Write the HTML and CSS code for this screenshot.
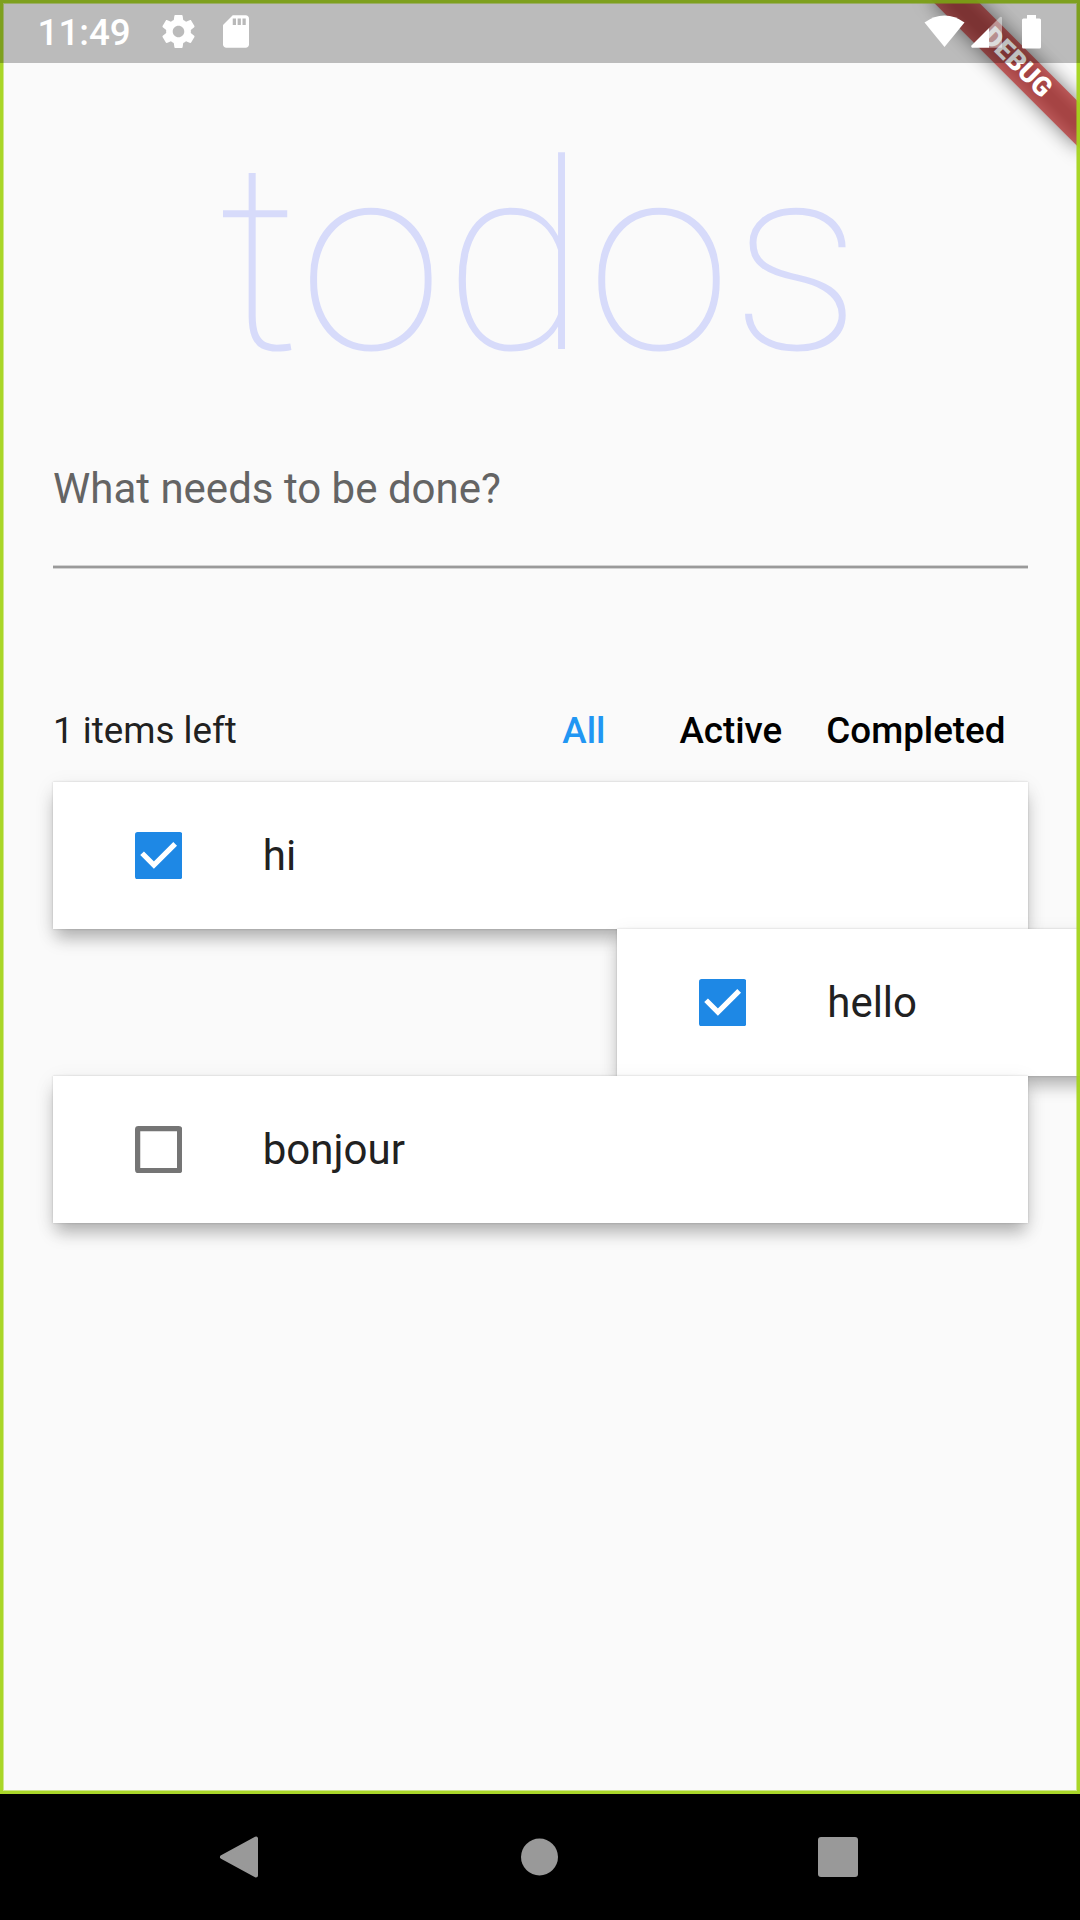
FILE: index.html
```html
<!DOCTYPE html>
<html lang="en">
<head>
<meta charset="utf-8">
<title>todos</title>
<link rel="stylesheet" href="styles.css">
</head>
<body>
<div class="screen">
  <main class="app">
    <h1 class="title">todos</h1>
    <div class="field">What needs to be done?</div>
    <div class="toolbar">
      <span class="count">1 items left</span>
      <nav class="filters">
        <span class="filter filter-all">All</span>
        <span class="filter filter-active">Active</span>
        <span class="filter">Completed</span>
      </nav>
    </div>
    <ul class="list">
      <li class="item">
        <svg class="box" viewBox="0 0 18 18"><rect width="18" height="18" rx="1" fill="#1e88e5"/><path d="M2.7 8.1L7.2 12.6L15.3 4.5" fill="none" stroke="#fff" stroke-width="2"/></svg>
        <span>hi</span>
      </li>
      <li class="item item-dragged">
        <svg class="box" viewBox="0 0 18 18"><rect width="18" height="18" rx="1" fill="#1e88e5"/><path d="M2.7 8.1L7.2 12.6L15.3 4.5" fill="none" stroke="#fff" stroke-width="2"/></svg>
        <span>hello</span>
      </li>
      <li class="item">
        <svg class="box" viewBox="0 0 18 18"><rect x="1" y="1" width="16" height="16" rx=".3" fill="none" stroke="#757575" stroke-width="2"/></svg>
        <span>bonjour</span>
      </li>
    </ul>
    <div class="banner">DEBUG</div>
    <div class="outline"></div>
    <header class="status">
      <span class="clock">11:49</span>
      <svg class="gear" viewBox="2 2 20 20"><path fill="#fff" d="M19.43 12.98c.04-.32.07-.64.07-.98s-.03-.66-.07-.98l2.11-1.65c.19-.15.24-.42.12-.64l-2-3.46c-.12-.22-.39-.3-.61-.22l-2.49 1c-.52-.4-1.08-.73-1.69-.98l-.38-2.65C14.46 2.18 14.25 2 14 2h-4c-.25 0-.46.18-.49.42l-.38 2.65c-.61.25-1.17.59-1.69.98l-2.49-1c-.23-.09-.49 0-.61.22l-2 3.46c-.13.22-.07.49.12.64l2.11 1.65c-.04.32-.07.65-.07.98s.03.66.07.98l-2.11 1.65c-.19.15-.24.42-.12.64l2 3.46c.12.22.39.3.61.22l2.49-1c.52.4 1.08.73 1.69.98l.38 2.65c.03.24.24.42.49.42h4c.25 0 .46-.18.49-.42l.38-2.65c.61-.25 1.17-.59 1.69-.98l2.49 1c.23.09.49 0 .61-.22l2-3.46c.12-.22.07-.49-.12-.64l-2.11-1.65zM12 15.5c-1.93 0-3.5-1.57-3.5-3.5s1.57-3.5 3.5-3.5 3.5 1.57 3.5 3.5-1.57 3.5-3.5 3.5z"/></svg>
      <svg class="card" viewBox="4 2 16 20"><path fill="#fff" d="M18 2h-8L4.02 8 4 20c0 1.100.9 2 2 2h12c1.100 0 2-.9 2-2V4c0-1.100-.9-2-2-2z"/><path fill="#b9b9b9" d="M10 4h2v4h-2zM13 4h2v4h-2zM16 4h2v4h-2z"/></svg>
      <svg class="signals" viewBox="924 13 118 35"><path fill="#fff" d="M944.500 46L924.500 21.500Q934 14.500 944.500 14.500T964.500 21.500z"/><path fill="#fff" fill-opacity=".45" d="M989 27V46.800H1002V16.500Q1001 15 999.500 16.500z"/><path fill="#fff" d="M989 27V46.800H972Q970.500 46 971.500 44.500z"/><path fill="#fff" d="M1027 14h9v3.500h3.500q1.500 0 1.500 1.500v27q0 1.500-1.500 1.500h-16q-1.500 0-1.500-1.500V19q0-1.500 1.500-1.500h3.500z"/></svg>
    </header>
  </main>
  <footer class="navbar">
    <svg class="nav-icon" viewBox="0 0 44 44"><path d="M38 3.500V40.500L4 22z" fill="#999" stroke="#999" stroke-width="4" stroke-linejoin="round"/></svg>
    <svg class="nav-icon" viewBox="0 0 44 44"><circle cx="22.500" cy="22" r="18.500" fill="#999"/></svg>
    <svg class="nav-icon" viewBox="0 0 44 44"><rect x="2" y="2" width="40" height="40" rx="3" fill="#999"/></svg>
  </footer>
</div>
</body>
</html>
```
FILE: styles.css
```css
* {
  box-sizing: border-box;
}

body {
  margin: 0;
  font-family: Roboto, "Liberation Sans", sans-serif;
  color: #212121;
}

.screen {
  display: flex;
  flex-direction: column;
  width: 1080px;
  height: 1920px;
  overflow: hidden;
}

.app {
  position: relative;
  height: 1794px;
  padding: 105px 52.5px 0;
  background: #fafafa;
  overflow: hidden;
}

.title {
  height: 303px;
  margin: 0;
  font-size: 262.5px;
  line-height: 308px;
  font-weight: 100;
  text-align: center;
  color: #d7dbfa;
}

.field {
  height: 161px;
  padding: 56px 0 0 .5px;
  border-bottom: 1px solid #d2d2d2;
  box-shadow: inset 0 -2px #9a9a9a, inset 0 -3px #d2d2d2;
  font-size: 42px;
  line-height: 49px;
  color: #646464;
}

.toolbar {
  display: flex;
  align-items: center;
  justify-content: space-between;
  height: 128px;
  margin-top: 98px;
  padding: 0 22px 0 .5px;
  font-size: 36.75px;
  line-height: 44px;
}

.filters {
  display: flex;
  font-weight: 500;
  color: #000;
}

.filter-all {
  margin-right: 74px;
  color: #2196f3;
}

.filter-active {
  margin-right: 44px;
}

.list {
  margin: -13px 0 0;
  padding: 0;
  list-style: none;
}

.item {
  position: relative;
  display: flex;
  align-items: center;
  gap: 81px;
  height: 147px;
  padding-left: 82px;
  background: #fff;
  font-size: 42px;
  line-height: 50px;
  box-shadow: 0 0 2px rgba(0, 0, 0, .18), 0 12px 16px -3px rgba(0, 0, 0, .26), 0 5px 20px rgba(0, 0, 0, .08);
}

.item-dragged {
  left: 564.5px;
}

.box {
  width: 47.25px;
  height: 47.25px;
}

.outline {
  position: absolute;
  inset: 0;
  border: 3px solid rgba(164, 212, 28, .95);
  box-shadow: inset 0 0 0 1px rgba(164, 212, 28, .5);
}

.banner {
  position: absolute;
  left: 912px;
  top: 47.25px;
  width: 210px;
  height: 31.5px;
  color: #fff;
  font-size: 26.8px;
  line-height: 31.5px;
  font-weight: 900;
  text-align: center;
  transform: rotate(45deg);
}

.banner::before,
.banner::after {
  content: "";
  position: absolute;
  inset: 0;
}

.banner::before {
  z-index: -2;
  background: rgba(0, 0, 0, .5);
  filter: blur(9.5px);
}

.banner::after {
  z-index: -1;
  background: rgba(183, 28, 28, .63);
}

.status {
  position: absolute;
  top: 0;
  left: 0;
  display: flex;
  align-items: center;
  width: 1080px;
  height: 63px;
  padding: 0 38px 0 37.5px;
  background: rgba(0, 0, 0, .25);
  color: #fff;
}

.clock {
  width: 124px;
  padding-top: 2px;
  font-size: 36.75px;
  line-height: 44px;
  font-weight: 500;
}

.gear {
  width: 33px;
  height: 33px;
}

.card {
  width: 26px;
  height: 33px;
  margin-left: 28px;
}

.signals {
  width: 118px;
  height: 35px;
  margin-left: auto;
}

.navbar {
  display: flex;
  align-items: center;
  justify-content: center;
  gap: 255px;
  height: 126px;
  padding: 0 2px 1px 0;
  background: #000;
}

.nav-icon {
  width: 44px;
  height: 44px;
}
```
